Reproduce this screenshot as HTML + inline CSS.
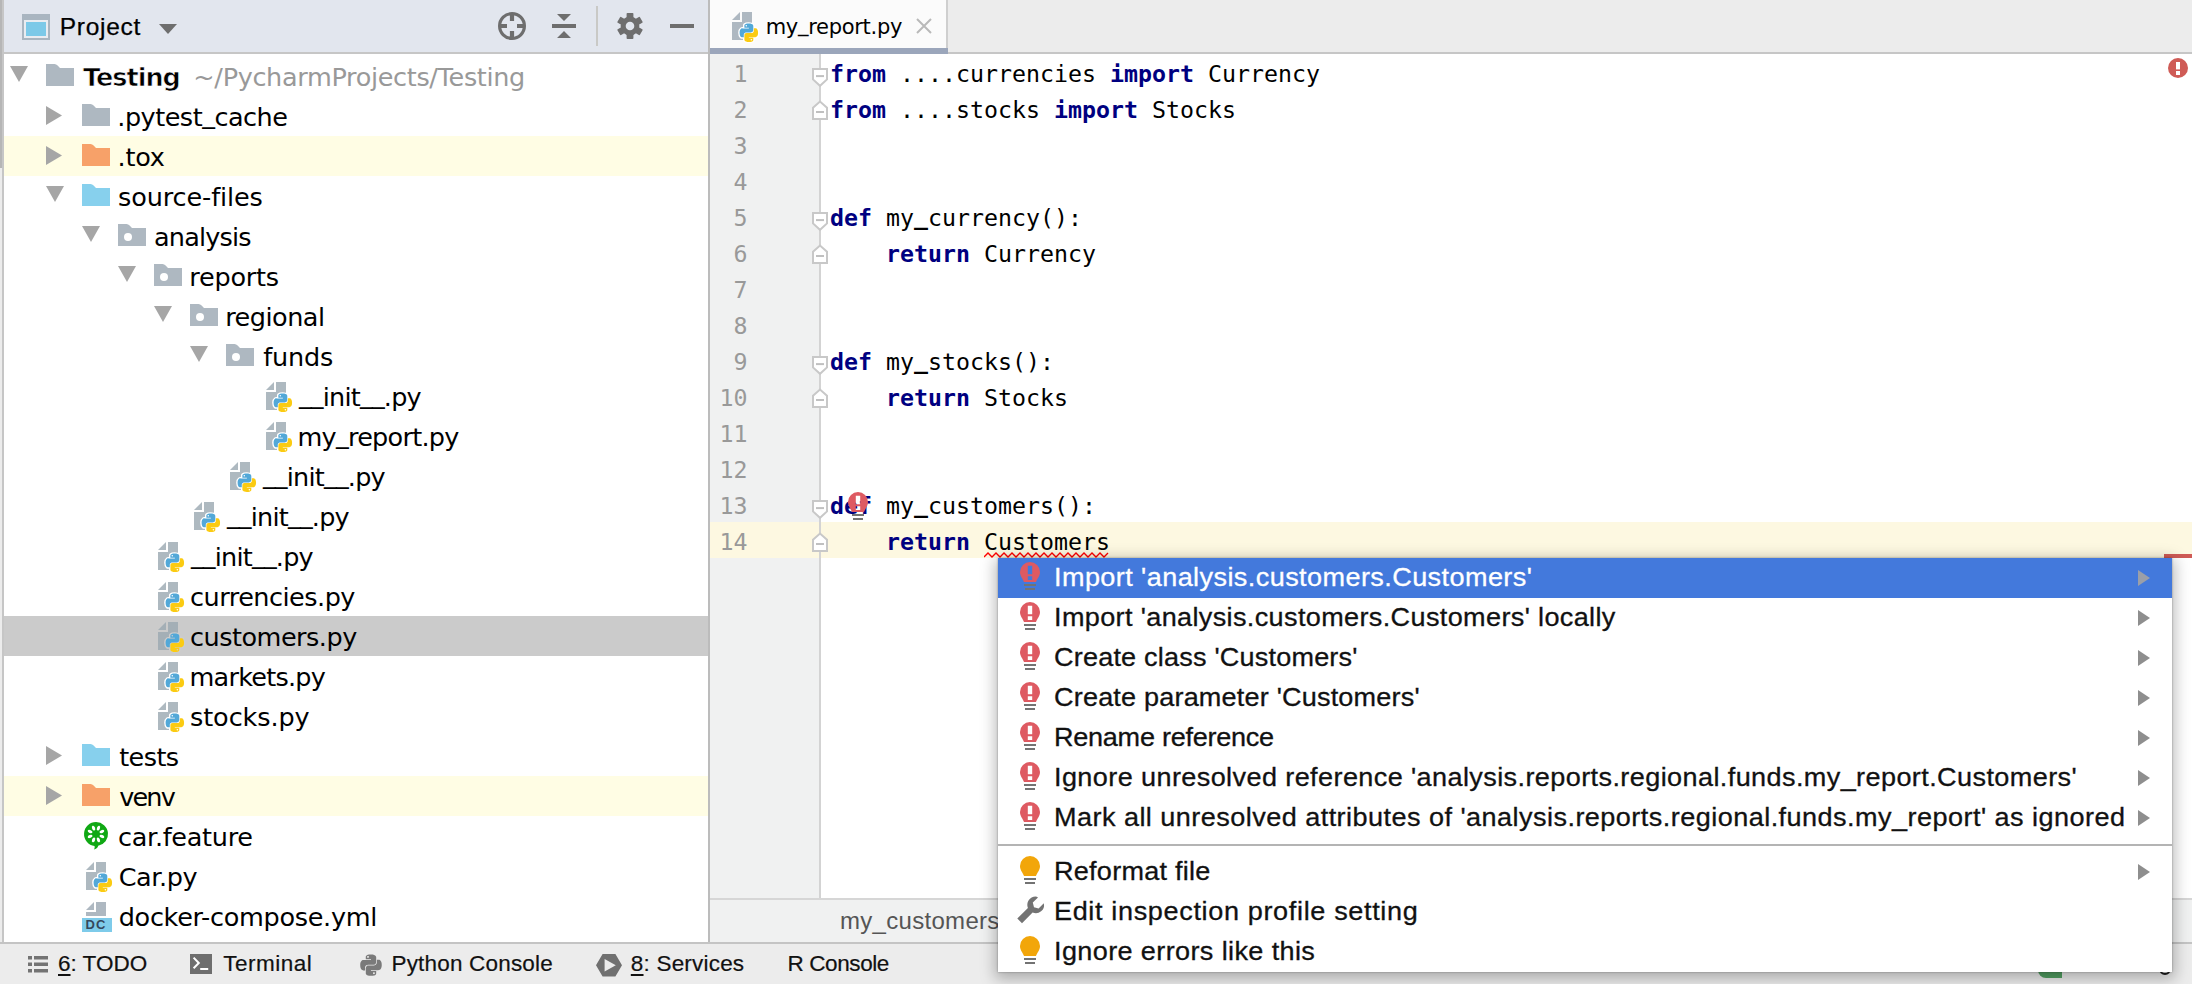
<!DOCTYPE html>
<html lang="en"><head><meta charset="utf-8"><title>PyCharm - my_report.py</title>
<style>
html,body{margin:0;padding:0}
body{width:2192px;height:984px;overflow:hidden;position:relative;background:#fff;
 font-family:"Liberation Sans",sans-serif;color:#000}
div,span,svg,pre{position:absolute;margin:0;padding:0}
b{font-weight:bold}
i.u{font-style:normal;position:relative;top:-3px}
.cd i.u{top:-0.6px;font-weight:bold}
#tabt i.u{top:-2.4px}
.ic{display:block}
/* left stripe */
#stripeA{left:0;top:0;width:2px;height:984px;background:#ececec}
#stripeA2{left:0;top:0;width:2px;height:168px;background:#b6b6b6}
#stripeB{left:2px;top:0;width:2px;height:984px;background:#c6c6c6}
/* project header */
#phead{left:4px;top:0;width:704px;height:52px;background:#e2e6ee}
#pheadb{left:4px;top:52px;width:704px;height:2px;background:#c6c6c6}
#ptitle{left:55.8px;top:6.8px;font-size:24.5px;letter-spacing:0.7px;line-height:40px;white-space:nowrap;-webkit-text-stroke:0.25px #000}
/* tree */
#tree{left:4px;top:54px;width:704px;height:888px;background:#fff;overflow:hidden;
 font-family:"DejaVu Sans","Liberation Sans",sans-serif;font-size:25.5px;letter-spacing:-0.5px}
#treewrap{left:4px;top:0;width:704px;height:942px;overflow:hidden;
 font-family:"DejaVu Sans","Liberation Sans",sans-serif;font-size:25.5px;letter-spacing:-0.5px}
.row{left:0;width:704px;height:40px}
.row.excl{background:#fffde4}
.row.sel{background:#cbcbcb}
.row .t{top:1px;line-height:40px;white-space:nowrap;color:#000}
.row .t b{letter-spacing:-1px;-webkit-text-stroke:0.7px #fff}
.row .path{position:static;color:#999;margin-left:13.5px;letter-spacing:-0.33px}
#pborder{left:708px;top:0;width:2px;height:942px;background:#bcbcbc}
/* editor */
#tabbar{left:710px;top:0;width:1482px;height:52px;background:#ececec}
#tabbarb{left:710px;top:52px;width:1482px;height:2px;background:#c6c6c6}
#tab{left:710px;top:0;width:236px;height:48px;background:#fbfbfb}
#tabr{left:946px;top:0;width:2px;height:48px;background:#cfcfcf}
#tabu{left:710px;top:48px;width:238px;height:6px;background:#9ba6bb}
#tabt{left:55.7px;top:6.6px;line-height:40px;font-family:"DejaVu Sans",sans-serif;font-size:21px;letter-spacing:-0.3px;white-space:nowrap}
#gutter{left:710px;top:54px;width:109px;height:844px;background:#f0f1f1}
#gline{left:819px;top:54px;width:2px;height:844px;background:#d3d3d3}
.ln{left:710px;width:1482px;height:36px}
.ln.cur{background:#fdf8e1}
.no{right:1444.4px;top:1.7px;line-height:36px;font-family:"DejaVu Sans Mono","Liberation Mono",monospace;font-size:23.25px;color:#999;text-align:right}
.cd{left:120px;top:1.7px;line-height:36px;font-family:"DejaVu Sans Mono","Liberation Mono",monospace;font-size:23.25px;color:#000;white-space:pre}
.cd b{color:#000080}
.err{position:static}
.fold{left:811px}
#errmark{left:2164px;top:554px;width:28px;height:4px;background:#cf5b56}
#crumb{left:710px;top:898px;width:1482px;height:44px;background:#f0f1f1}
#crumbb{left:710px;top:898px;width:1482px;height:2px;background:#d6d6d6}
#crumbt{left:130px;top:3px;line-height:40px;font-size:24px;letter-spacing:0.3px;color:#555;white-space:nowrap}
/* bottom bar */
#bbar{left:0;top:942px;width:2192px;height:42px;background:#ececec}
#bbarb{left:0;top:942px;width:2192px;height:2px;background:#c4c4c4}
.bt{top:2px;line-height:40px;font-size:22.5px;white-space:nowrap;color:#111;-webkit-text-stroke:0.2px #111}
.bt u{text-decoration:underline;text-underline-offset:2.5px;text-decoration-thickness:2px}
/* popup */
#popup{left:998px;top:558px;width:1174px;height:414px;background:#fff;
 box-shadow:0 4px 14px 3px rgba(0,0,0,.27), 0 0 2px rgba(0,0,0,.35)}
.pi{left:0;width:1174px;height:40px}
.pi.selp{background:#4379dc}
.pi.selp .pt{color:#fff}
.pt{left:56px;top:-1px;line-height:40px;font-size:26px;white-space:nowrap;color:#111;transform-origin:0 50%;transform:scaleX(1.04);-webkit-text-stroke:0.3px #111}
.pi.selp .pt{-webkit-text-stroke:0.3px #fff}
.sep{left:0;width:1174px;height:2px;background:#b4b4b4}
</style></head><body>

<!-- ======= left stripe ======= -->
<div id="stripeA"></div><div id="stripeA2"></div><div id="stripeB"></div>

<!-- ======= project tool window ======= -->
<div id="phead">
 <svg class="ic" width="28" height="26" viewBox="0 0 28 26" style="left:18px;top:14px">
  <rect x="0" y="0" width="28" height="26" fill="#a9b5c0"/>
  <rect x="2" y="6" width="24" height="18" fill="#e9ecf1"/>
  <rect x="4" y="8" width="20" height="14" fill="#7cc9e8"/>
 </svg>
 <span id="ptitle">Project</span>
 <svg class="ic" width="18" height="10" viewBox="0 0 18 10" style="left:155px;top:24px"><path d="M0,0 H18 L9,10Z" fill="#6e6e6e"/></svg>
 <!-- locate -->
 <svg class="ic" width="30" height="30" viewBox="0 0 30 30" style="left:493px;top:11px">
  <circle cx="15" cy="15" r="12.4" fill="none" stroke="#6e6e6e" stroke-width="3.2"/>
  <path d="M15,3 V10 M15,20 V27 M3,15 H10 M20,15 H27" stroke="#6e6e6e" stroke-width="4.2" fill="none"/>
 </svg>
 <!-- collapse all -->
 <svg class="ic" width="24" height="26" viewBox="0 0 24 26" style="left:548px;top:13px">
  <path d="M5,1 H19 L12,8Z M0,11 H24 V15 H0Z M12,18 L19,25 H5Z" fill="#6e6e6e"/>
 </svg>
 <div style="left:592px;top:6px;width:2px;height:40px;background:#c9c9c6"></div>
 <!-- gear -->
 <svg class="ic" width="26" height="26" viewBox="-13 -13 26 26" style="left:613px;top:13px">
  <g fill="#6e6e6e">
   <rect x="-3.4" y="-13" width="6.8" height="26" rx="0.8"/>
   <rect x="-3.4" y="-13" width="6.8" height="26" rx="0.8" transform="rotate(60)"/>
   <rect x="-3.4" y="-13" width="6.8" height="26" rx="0.8" transform="rotate(120)"/>
   <circle r="9.4"/>
  </g>
  <circle r="4.3" fill="#e2e6ee"/>
 </svg>
 <div style="left:666px;top:24px;width:24px;height:4px;background:#6e6e6e"></div>
</div>
<div id="pheadb"></div>

<div id="tree">
<div style="left:0;top:-54px;width:704px;height:942px">
<div class="row " style="top:56px"><svg class="ic" width="18" height="16" viewBox="0 0 18 16" style="left:6px;top:10px"><path d="M0,0 H18 L9,16Z" fill="#a6a6a6"/></svg><svg class="ic" width="28" height="22" viewBox="0 0 28 22" style="left:42px;top:8px"><path d="M0,0 H8.5 Q10.3,0 11.6,1.6 L14,4 H28 V22 H0Z" fill="#aeb8c1"/></svg><span class="t" style="left:79.0px;letter-spacing:-0.50px"><b>Testing</b><span class="path">~/PycharmProjects/Testing</span></span></div>
<div class="row " style="top:96px"><svg class="ic" width="16" height="19" viewBox="0 0 16 19" style="left:42px;top:10px"><path d="M0,0 L16,9.5 L0,19Z" fill="#a6a6a6"/></svg><svg class="ic" width="28" height="22" viewBox="0 0 28 22" style="left:78px;top:8px"><path d="M0,0 H8.5 Q10.3,0 11.6,1.6 L14,4 H28 V22 H0Z" fill="#aeb8c1"/></svg><span class="t" style="left:113.3px;letter-spacing:-0.50px">.pytest<i class="u">_</i>cache</span></div>
<div class="row excl" style="top:136px"><svg class="ic" width="16" height="19" viewBox="0 0 16 19" style="left:42px;top:10px"><path d="M0,0 L16,9.5 L0,19Z" fill="#a6a6a6"/></svg><svg class="ic" width="28" height="22" viewBox="0 0 28 22" style="left:78px;top:8px"><path d="M0,0 H8.5 Q10.3,0 11.6,1.6 L14,4 H28 V22 H0Z" fill="#f7a169"/></svg><span class="t" style="left:113.5px;letter-spacing:-0.20px">.tox</span></div>
<div class="row " style="top:176px"><svg class="ic" width="18" height="16" viewBox="0 0 18 16" style="left:42px;top:10px"><path d="M0,0 H18 L9,16Z" fill="#a6a6a6"/></svg><svg class="ic" width="28" height="22" viewBox="0 0 28 22" style="left:78px;top:8px"><path d="M0,0 H8.5 Q10.3,0 11.6,1.6 L14,4 H28 V22 H0Z" fill="#87d0ed"/></svg><span class="t" style="left:114.0px;letter-spacing:-0.10px">source-files</span></div>
<div class="row " style="top:216px"><svg class="ic" width="18" height="16" viewBox="0 0 18 16" style="left:78px;top:10px"><path d="M0,0 H18 L9,16Z" fill="#a6a6a6"/></svg><svg class="ic" width="28" height="22" viewBox="0 0 28 22" style="left:114px;top:8px"><path d="M0,0 H8.5 Q10.3,0 11.6,1.6 L14,4 H28 V22 H0Z" fill="#aeb8c1"/><circle cx="10" cy="13" r="4" fill="#fff"/></svg><span class="t" style="left:150.0px;letter-spacing:-0.80px">analysis</span></div>
<div class="row " style="top:256px"><svg class="ic" width="18" height="16" viewBox="0 0 18 16" style="left:114px;top:10px"><path d="M0,0 H18 L9,16Z" fill="#a6a6a6"/></svg><svg class="ic" width="28" height="22" viewBox="0 0 28 22" style="left:150px;top:8px"><path d="M0,0 H8.5 Q10.3,0 11.6,1.6 L14,4 H28 V22 H0Z" fill="#aeb8c1"/><circle cx="10" cy="13" r="4" fill="#fff"/></svg><span class="t" style="left:185.2px;letter-spacing:-0.20px">reports</span></div>
<div class="row " style="top:296px"><svg class="ic" width="18" height="16" viewBox="0 0 18 16" style="left:150px;top:10px"><path d="M0,0 H18 L9,16Z" fill="#a6a6a6"/></svg><svg class="ic" width="28" height="22" viewBox="0 0 28 22" style="left:186px;top:8px"><path d="M0,0 H8.5 Q10.3,0 11.6,1.6 L14,4 H28 V22 H0Z" fill="#aeb8c1"/><circle cx="10" cy="13" r="4" fill="#fff"/></svg><span class="t" style="left:221.2px;letter-spacing:-0.50px">regional</span></div>
<div class="row " style="top:336px"><svg class="ic" width="18" height="16" viewBox="0 0 18 16" style="left:186px;top:10px"><path d="M0,0 H18 L9,16Z" fill="#a6a6a6"/></svg><svg class="ic" width="28" height="22" viewBox="0 0 28 22" style="left:222px;top:8px"><path d="M0,0 H8.5 Q10.3,0 11.6,1.6 L14,4 H28 V22 H0Z" fill="#aeb8c1"/><circle cx="10" cy="13" r="4" fill="#fff"/></svg><span class="t" style="left:259.3px;letter-spacing:-0.20px">funds</span></div>
<div class="row " style="top:376px"><svg class="ic" width="28" height="32" viewBox="0 0 28 32" style="left:262px;top:6px"><path fill="#9aa7b0" fill-opacity=".8" d="M8,0 V8 H0Z M10,0 H20 V28 H0 V10 H10Z"/><g transform="translate(7.6,11.6) scale(0.167)"><g stroke="#fff" stroke-width="17" stroke-linejoin="round"><path fill="#fff" d="M54.9,0C26.8,0,28.6,12.2,28.6,12.2l0,12.6h26.8v3.8H17.9C17.9,28.6,0,26.6,0,54.9c0,28.3,15.7,27.3,15.7,27.3h9.4V69c0,0-.5-15.7,15.4-15.7h26.6c0,0,14.9.24,14.9-14.4V14.9C82,14.9,84.3,0,54.9,0z"/><path fill="#fff" d="M55.7,109.8c28.1,0,26.3-12.2,26.3-12.2l0-12.6H55.2v-3.8h37.4c0,0,18,2,18-26.3c0-28.3-15.7-27.3-15.7-27.3h-9.4v13.1c0,0,.5,15.7-15.4,15.7H43.6c0,0-14.9-.24-14.9,14.4v24.1C28.7,94.9,26.4,109.8,55.7,109.8z"/></g><path fill="#52a8d8" fill-rule="evenodd" d="M54.9,0C26.8,0,28.6,12.2,28.6,12.2l0,12.6h26.8v3.8H17.9C17.9,28.6,0,26.6,0,54.9c0,28.3,15.7,27.3,15.7,27.3h9.4V69c0,0-.5-15.7,15.4-15.7h26.6c0,0,14.9.24,14.9-14.4V14.9C82,14.9,84.3,0,54.9,0zM40.1,8.5c2.7,0,4.8,2.2,4.8,4.8c0,2.7-2.2,4.8-4.8,4.8c-2.7,0-4.8-2.2-4.8-4.8C35.3,10.7,37.5,8.5,40.1,8.5z"/><path fill="#fbcb12" fill-rule="evenodd" d="M55.7,109.8c28.1,0,26.3-12.2,26.3-12.2l0-12.6H55.2v-3.8h37.4c0,0,18,2,18-26.3c0-28.3-15.7-27.3-15.7-27.3h-9.4v13.1c0,0,.5,15.7-15.4,15.7H43.6c0,0-14.9-.24-14.9,14.4v24.1C28.7,94.9,26.4,109.8,55.7,109.8zM70.5,101.3c-2.7,0-4.8-2.2-4.8-4.8c0-2.7,2.2-4.8,4.8-4.8c2.7,0,4.8,2.2,4.8,4.8C75.3,99.1,73.2,101.3,70.5,101.3z"/></g></svg><span class="t" style="left:294.9px;letter-spacing:-0.80px"><i class="u">_</i><i class="u">_</i>init<i class="u">_</i><i class="u">_</i>.py</span></div>
<div class="row " style="top:416px"><svg class="ic" width="28" height="32" viewBox="0 0 28 32" style="left:262px;top:6px"><path fill="#9aa7b0" fill-opacity=".8" d="M8,0 V8 H0Z M10,0 H20 V28 H0 V10 H10Z"/><g transform="translate(7.6,11.6) scale(0.167)"><g stroke="#fff" stroke-width="17" stroke-linejoin="round"><path fill="#fff" d="M54.9,0C26.8,0,28.6,12.2,28.6,12.2l0,12.6h26.8v3.8H17.9C17.9,28.6,0,26.6,0,54.9c0,28.3,15.7,27.3,15.7,27.3h9.4V69c0,0-.5-15.7,15.4-15.7h26.6c0,0,14.9.24,14.9-14.4V14.9C82,14.9,84.3,0,54.9,0z"/><path fill="#fff" d="M55.7,109.8c28.1,0,26.3-12.2,26.3-12.2l0-12.6H55.2v-3.8h37.4c0,0,18,2,18-26.3c0-28.3-15.7-27.3-15.7-27.3h-9.4v13.1c0,0,.5,15.7-15.4,15.7H43.6c0,0-14.9-.24-14.9,14.4v24.1C28.7,94.9,26.4,109.8,55.7,109.8z"/></g><path fill="#52a8d8" fill-rule="evenodd" d="M54.9,0C26.8,0,28.6,12.2,28.6,12.2l0,12.6h26.8v3.8H17.9C17.9,28.6,0,26.6,0,54.9c0,28.3,15.7,27.3,15.7,27.3h9.4V69c0,0-.5-15.7,15.4-15.7h26.6c0,0,14.9.24,14.9-14.4V14.9C82,14.9,84.3,0,54.9,0zM40.1,8.5c2.7,0,4.8,2.2,4.8,4.8c0,2.7-2.2,4.8-4.8,4.8c-2.7,0-4.8-2.2-4.8-4.8C35.3,10.7,37.5,8.5,40.1,8.5z"/><path fill="#fbcb12" fill-rule="evenodd" d="M55.7,109.8c28.1,0,26.3-12.2,26.3-12.2l0-12.6H55.2v-3.8h37.4c0,0,18,2,18-26.3c0-28.3-15.7-27.3-15.7-27.3h-9.4v13.1c0,0,.5,15.7-15.4,15.7H43.6c0,0-14.9-.24-14.9,14.4v24.1C28.7,94.9,26.4,109.8,55.7,109.8zM70.5,101.3c-2.7,0-4.8-2.2-4.8-4.8c0-2.7,2.2-4.8,4.8-4.8c2.7,0,4.8,2.2,4.8,4.8C75.3,99.1,73.2,101.3,70.5,101.3z"/></g></svg><span class="t" style="left:293.5px;letter-spacing:-0.74px">my<i class="u">_</i>report.py</span></div>
<div class="row " style="top:456px"><svg class="ic" width="28" height="32" viewBox="0 0 28 32" style="left:226px;top:6px"><path fill="#9aa7b0" fill-opacity=".8" d="M8,0 V8 H0Z M10,0 H20 V28 H0 V10 H10Z"/><g transform="translate(7.6,11.6) scale(0.167)"><g stroke="#fff" stroke-width="17" stroke-linejoin="round"><path fill="#fff" d="M54.9,0C26.8,0,28.6,12.2,28.6,12.2l0,12.6h26.8v3.8H17.9C17.9,28.6,0,26.6,0,54.9c0,28.3,15.7,27.3,15.7,27.3h9.4V69c0,0-.5-15.7,15.4-15.7h26.6c0,0,14.9.24,14.9-14.4V14.9C82,14.9,84.3,0,54.9,0z"/><path fill="#fff" d="M55.7,109.8c28.1,0,26.3-12.2,26.3-12.2l0-12.6H55.2v-3.8h37.4c0,0,18,2,18-26.3c0-28.3-15.7-27.3-15.7-27.3h-9.4v13.1c0,0,.5,15.7-15.4,15.7H43.6c0,0-14.9-.24-14.9,14.4v24.1C28.7,94.9,26.4,109.8,55.7,109.8z"/></g><path fill="#52a8d8" fill-rule="evenodd" d="M54.9,0C26.8,0,28.6,12.2,28.6,12.2l0,12.6h26.8v3.8H17.9C17.9,28.6,0,26.6,0,54.9c0,28.3,15.7,27.3,15.7,27.3h9.4V69c0,0-.5-15.7,15.4-15.7h26.6c0,0,14.9.24,14.9-14.4V14.9C82,14.9,84.3,0,54.9,0zM40.1,8.5c2.7,0,4.8,2.2,4.8,4.8c0,2.7-2.2,4.8-4.8,4.8c-2.7,0-4.8-2.2-4.8-4.8C35.3,10.7,37.5,8.5,40.1,8.5z"/><path fill="#fbcb12" fill-rule="evenodd" d="M55.7,109.8c28.1,0,26.3-12.2,26.3-12.2l0-12.6H55.2v-3.8h37.4c0,0,18,2,18-26.3c0-28.3-15.7-27.3-15.7-27.3h-9.4v13.1c0,0,.5,15.7-15.4,15.7H43.6c0,0-14.9-.24-14.9,14.4v24.1C28.7,94.9,26.4,109.8,55.7,109.8zM70.5,101.3c-2.7,0-4.8-2.2-4.8-4.8c0-2.7,2.2-4.8,4.8-4.8c2.7,0,4.8,2.2,4.8,4.8C75.3,99.1,73.2,101.3,70.5,101.3z"/></g></svg><span class="t" style="left:258.9px;letter-spacing:-0.80px"><i class="u">_</i><i class="u">_</i>init<i class="u">_</i><i class="u">_</i>.py</span></div>
<div class="row " style="top:496px"><svg class="ic" width="28" height="32" viewBox="0 0 28 32" style="left:190px;top:6px"><path fill="#9aa7b0" fill-opacity=".8" d="M8,0 V8 H0Z M10,0 H20 V28 H0 V10 H10Z"/><g transform="translate(7.6,11.6) scale(0.167)"><g stroke="#fff" stroke-width="17" stroke-linejoin="round"><path fill="#fff" d="M54.9,0C26.8,0,28.6,12.2,28.6,12.2l0,12.6h26.8v3.8H17.9C17.9,28.6,0,26.6,0,54.9c0,28.3,15.7,27.3,15.7,27.3h9.4V69c0,0-.5-15.7,15.4-15.7h26.6c0,0,14.9.24,14.9-14.4V14.9C82,14.9,84.3,0,54.9,0z"/><path fill="#fff" d="M55.7,109.8c28.1,0,26.3-12.2,26.3-12.2l0-12.6H55.2v-3.8h37.4c0,0,18,2,18-26.3c0-28.3-15.7-27.3-15.7-27.3h-9.4v13.1c0,0,.5,15.7-15.4,15.7H43.6c0,0-14.9-.24-14.9,14.4v24.1C28.7,94.9,26.4,109.8,55.7,109.8z"/></g><path fill="#52a8d8" fill-rule="evenodd" d="M54.9,0C26.8,0,28.6,12.2,28.6,12.2l0,12.6h26.8v3.8H17.9C17.9,28.6,0,26.6,0,54.9c0,28.3,15.7,27.3,15.7,27.3h9.4V69c0,0-.5-15.7,15.4-15.7h26.6c0,0,14.9.24,14.9-14.4V14.9C82,14.9,84.3,0,54.9,0zM40.1,8.5c2.7,0,4.8,2.2,4.8,4.8c0,2.7-2.2,4.8-4.8,4.8c-2.7,0-4.8-2.2-4.8-4.8C35.3,10.7,37.5,8.5,40.1,8.5z"/><path fill="#fbcb12" fill-rule="evenodd" d="M55.7,109.8c28.1,0,26.3-12.2,26.3-12.2l0-12.6H55.2v-3.8h37.4c0,0,18,2,18-26.3c0-28.3-15.7-27.3-15.7-27.3h-9.4v13.1c0,0,.5,15.7-15.4,15.7H43.6c0,0-14.9-.24-14.9,14.4v24.1C28.7,94.9,26.4,109.8,55.7,109.8zM70.5,101.3c-2.7,0-4.8-2.2-4.8-4.8c0-2.7,2.2-4.8,4.8-4.8c2.7,0,4.8,2.2,4.8,4.8C75.3,99.1,73.2,101.3,70.5,101.3z"/></g></svg><span class="t" style="left:222.9px;letter-spacing:-0.80px"><i class="u">_</i><i class="u">_</i>init<i class="u">_</i><i class="u">_</i>.py</span></div>
<div class="row " style="top:536px"><svg class="ic" width="28" height="32" viewBox="0 0 28 32" style="left:154px;top:6px"><path fill="#9aa7b0" fill-opacity=".8" d="M8,0 V8 H0Z M10,0 H20 V28 H0 V10 H10Z"/><g transform="translate(7.6,11.6) scale(0.167)"><g stroke="#fff" stroke-width="17" stroke-linejoin="round"><path fill="#fff" d="M54.9,0C26.8,0,28.6,12.2,28.6,12.2l0,12.6h26.8v3.8H17.9C17.9,28.6,0,26.6,0,54.9c0,28.3,15.7,27.3,15.7,27.3h9.4V69c0,0-.5-15.7,15.4-15.7h26.6c0,0,14.9.24,14.9-14.4V14.9C82,14.9,84.3,0,54.9,0z"/><path fill="#fff" d="M55.7,109.8c28.1,0,26.3-12.2,26.3-12.2l0-12.6H55.2v-3.8h37.4c0,0,18,2,18-26.3c0-28.3-15.7-27.3-15.7-27.3h-9.4v13.1c0,0,.5,15.7-15.4,15.7H43.6c0,0-14.9-.24-14.9,14.4v24.1C28.7,94.9,26.4,109.8,55.7,109.8z"/></g><path fill="#52a8d8" fill-rule="evenodd" d="M54.9,0C26.8,0,28.6,12.2,28.6,12.2l0,12.6h26.8v3.8H17.9C17.9,28.6,0,26.6,0,54.9c0,28.3,15.7,27.3,15.7,27.3h9.4V69c0,0-.5-15.7,15.4-15.7h26.6c0,0,14.9.24,14.9-14.4V14.9C82,14.9,84.3,0,54.9,0zM40.1,8.5c2.7,0,4.8,2.2,4.8,4.8c0,2.7-2.2,4.8-4.8,4.8c-2.7,0-4.8-2.2-4.8-4.8C35.3,10.7,37.5,8.5,40.1,8.5z"/><path fill="#fbcb12" fill-rule="evenodd" d="M55.7,109.8c28.1,0,26.3-12.2,26.3-12.2l0-12.6H55.2v-3.8h37.4c0,0,18,2,18-26.3c0-28.3-15.7-27.3-15.7-27.3h-9.4v13.1c0,0,.5,15.7-15.4,15.7H43.6c0,0-14.9-.24-14.9,14.4v24.1C28.7,94.9,26.4,109.8,55.7,109.8zM70.5,101.3c-2.7,0-4.8-2.2-4.8-4.8c0-2.7,2.2-4.8,4.8-4.8c2.7,0,4.8,2.2,4.8,4.8C75.3,99.1,73.2,101.3,70.5,101.3z"/></g></svg><span class="t" style="left:186.9px;letter-spacing:-0.80px"><i class="u">_</i><i class="u">_</i>init<i class="u">_</i><i class="u">_</i>.py</span></div>
<div class="row " style="top:576px"><svg class="ic" width="28" height="32" viewBox="0 0 28 32" style="left:154px;top:6px"><path fill="#9aa7b0" fill-opacity=".8" d="M8,0 V8 H0Z M10,0 H20 V28 H0 V10 H10Z"/><g transform="translate(7.6,11.6) scale(0.167)"><g stroke="#fff" stroke-width="17" stroke-linejoin="round"><path fill="#fff" d="M54.9,0C26.8,0,28.6,12.2,28.6,12.2l0,12.6h26.8v3.8H17.9C17.9,28.6,0,26.6,0,54.9c0,28.3,15.7,27.3,15.7,27.3h9.4V69c0,0-.5-15.7,15.4-15.7h26.6c0,0,14.9.24,14.9-14.4V14.9C82,14.9,84.3,0,54.9,0z"/><path fill="#fff" d="M55.7,109.8c28.1,0,26.3-12.2,26.3-12.2l0-12.6H55.2v-3.8h37.4c0,0,18,2,18-26.3c0-28.3-15.7-27.3-15.7-27.3h-9.4v13.1c0,0,.5,15.7-15.4,15.7H43.6c0,0-14.9-.24-14.9,14.4v24.1C28.7,94.9,26.4,109.8,55.7,109.8z"/></g><path fill="#52a8d8" fill-rule="evenodd" d="M54.9,0C26.8,0,28.6,12.2,28.6,12.2l0,12.6h26.8v3.8H17.9C17.9,28.6,0,26.6,0,54.9c0,28.3,15.7,27.3,15.7,27.3h9.4V69c0,0-.5-15.7,15.4-15.7h26.6c0,0,14.9.24,14.9-14.4V14.9C82,14.9,84.3,0,54.9,0zM40.1,8.5c2.7,0,4.8,2.2,4.8,4.8c0,2.7-2.2,4.8-4.8,4.8c-2.7,0-4.8-2.2-4.8-4.8C35.3,10.7,37.5,8.5,40.1,8.5z"/><path fill="#fbcb12" fill-rule="evenodd" d="M55.7,109.8c28.1,0,26.3-12.2,26.3-12.2l0-12.6H55.2v-3.8h37.4c0,0,18,2,18-26.3c0-28.3-15.7-27.3-15.7-27.3h-9.4v13.1c0,0,.5,15.7-15.4,15.7H43.6c0,0-14.9-.24-14.9,14.4v24.1C28.7,94.9,26.4,109.8,55.7,109.8zM70.5,101.3c-2.7,0-4.8-2.2-4.8-4.8c0-2.7,2.2-4.8,4.8-4.8c2.7,0,4.8,2.2,4.8,4.8C75.3,99.1,73.2,101.3,70.5,101.3z"/></g></svg><span class="t" style="left:186.0px;letter-spacing:-0.50px">currencies.py</span></div>
<div class="row sel" style="top:616px"><svg class="ic" width="28" height="32" viewBox="0 0 28 32" style="left:154px;top:6px"><path fill="#9aa7b0" fill-opacity=".8" d="M8,0 V8 H0Z M10,0 H20 V28 H0 V10 H10Z"/><g transform="translate(7.6,11.6) scale(0.167)"><g stroke="#cdcdcd" stroke-width="17" stroke-linejoin="round"><path fill="#cdcdcd" d="M54.9,0C26.8,0,28.6,12.2,28.6,12.2l0,12.6h26.8v3.8H17.9C17.9,28.6,0,26.6,0,54.9c0,28.3,15.7,27.3,15.7,27.3h9.4V69c0,0-.5-15.7,15.4-15.7h26.6c0,0,14.9.24,14.9-14.4V14.9C82,14.9,84.3,0,54.9,0z"/><path fill="#cdcdcd" d="M55.7,109.8c28.1,0,26.3-12.2,26.3-12.2l0-12.6H55.2v-3.8h37.4c0,0,18,2,18-26.3c0-28.3-15.7-27.3-15.7-27.3h-9.4v13.1c0,0,.5,15.7-15.4,15.7H43.6c0,0-14.9-.24-14.9,14.4v24.1C28.7,94.9,26.4,109.8,55.7,109.8z"/></g><path fill="#52a8d8" fill-rule="evenodd" d="M54.9,0C26.8,0,28.6,12.2,28.6,12.2l0,12.6h26.8v3.8H17.9C17.9,28.6,0,26.6,0,54.9c0,28.3,15.7,27.3,15.7,27.3h9.4V69c0,0-.5-15.7,15.4-15.7h26.6c0,0,14.9.24,14.9-14.4V14.9C82,14.9,84.3,0,54.9,0zM40.1,8.5c2.7,0,4.8,2.2,4.8,4.8c0,2.7-2.2,4.8-4.8,4.8c-2.7,0-4.8-2.2-4.8-4.8C35.3,10.7,37.5,8.5,40.1,8.5z"/><path fill="#fbcb12" fill-rule="evenodd" d="M55.7,109.8c28.1,0,26.3-12.2,26.3-12.2l0-12.6H55.2v-3.8h37.4c0,0,18,2,18-26.3c0-28.3-15.7-27.3-15.7-27.3h-9.4v13.1c0,0,.5,15.7-15.4,15.7H43.6c0,0-14.9-.24-14.9,14.4v24.1C28.7,94.9,26.4,109.8,55.7,109.8zM70.5,101.3c-2.7,0-4.8-2.2-4.8-4.8c0-2.7,2.2-4.8,4.8-4.8c2.7,0,4.8,2.2,4.8,4.8C75.3,99.1,73.2,101.3,70.5,101.3z"/></g></svg><span class="t" style="left:186.0px;letter-spacing:-0.50px">customers.py</span></div>
<div class="row " style="top:656px"><svg class="ic" width="28" height="32" viewBox="0 0 28 32" style="left:154px;top:6px"><path fill="#9aa7b0" fill-opacity=".8" d="M8,0 V8 H0Z M10,0 H20 V28 H0 V10 H10Z"/><g transform="translate(7.6,11.6) scale(0.167)"><g stroke="#fff" stroke-width="17" stroke-linejoin="round"><path fill="#fff" d="M54.9,0C26.8,0,28.6,12.2,28.6,12.2l0,12.6h26.8v3.8H17.9C17.9,28.6,0,26.6,0,54.9c0,28.3,15.7,27.3,15.7,27.3h9.4V69c0,0-.5-15.7,15.4-15.7h26.6c0,0,14.9.24,14.9-14.4V14.9C82,14.9,84.3,0,54.9,0z"/><path fill="#fff" d="M55.7,109.8c28.1,0,26.3-12.2,26.3-12.2l0-12.6H55.2v-3.8h37.4c0,0,18,2,18-26.3c0-28.3-15.7-27.3-15.7-27.3h-9.4v13.1c0,0,.5,15.7-15.4,15.7H43.6c0,0-14.9-.24-14.9,14.4v24.1C28.7,94.9,26.4,109.8,55.7,109.8z"/></g><path fill="#52a8d8" fill-rule="evenodd" d="M54.9,0C26.8,0,28.6,12.2,28.6,12.2l0,12.6h26.8v3.8H17.9C17.9,28.6,0,26.6,0,54.9c0,28.3,15.7,27.3,15.7,27.3h9.4V69c0,0-.5-15.7,15.4-15.7h26.6c0,0,14.9.24,14.9-14.4V14.9C82,14.9,84.3,0,54.9,0zM40.1,8.5c2.7,0,4.8,2.2,4.8,4.8c0,2.7-2.2,4.8-4.8,4.8c-2.7,0-4.8-2.2-4.8-4.8C35.3,10.7,37.5,8.5,40.1,8.5z"/><path fill="#fbcb12" fill-rule="evenodd" d="M55.7,109.8c28.1,0,26.3-12.2,26.3-12.2l0-12.6H55.2v-3.8h37.4c0,0,18,2,18-26.3c0-28.3-15.7-27.3-15.7-27.3h-9.4v13.1c0,0,.5,15.7-15.4,15.7H43.6c0,0-14.9-.24-14.9,14.4v24.1C28.7,94.9,26.4,109.8,55.7,109.8zM70.5,101.3c-2.7,0-4.8-2.2-4.8-4.8c0-2.7,2.2-4.8,4.8-4.8c2.7,0,4.8,2.2,4.8,4.8C75.3,99.1,73.2,101.3,70.5,101.3z"/></g></svg><span class="t" style="left:185.5px;letter-spacing:-0.76px">markets.py</span></div>
<div class="row " style="top:696px"><svg class="ic" width="28" height="32" viewBox="0 0 28 32" style="left:154px;top:6px"><path fill="#9aa7b0" fill-opacity=".8" d="M8,0 V8 H0Z M10,0 H20 V28 H0 V10 H10Z"/><g transform="translate(7.6,11.6) scale(0.167)"><g stroke="#fff" stroke-width="17" stroke-linejoin="round"><path fill="#fff" d="M54.9,0C26.8,0,28.6,12.2,28.6,12.2l0,12.6h26.8v3.8H17.9C17.9,28.6,0,26.6,0,54.9c0,28.3,15.7,27.3,15.7,27.3h9.4V69c0,0-.5-15.7,15.4-15.7h26.6c0,0,14.9.24,14.9-14.4V14.9C82,14.9,84.3,0,54.9,0z"/><path fill="#fff" d="M55.7,109.8c28.1,0,26.3-12.2,26.3-12.2l0-12.6H55.2v-3.8h37.4c0,0,18,2,18-26.3c0-28.3-15.7-27.3-15.7-27.3h-9.4v13.1c0,0,.5,15.7-15.4,15.7H43.6c0,0-14.9-.24-14.9,14.4v24.1C28.7,94.9,26.4,109.8,55.7,109.8z"/></g><path fill="#52a8d8" fill-rule="evenodd" d="M54.9,0C26.8,0,28.6,12.2,28.6,12.2l0,12.6h26.8v3.8H17.9C17.9,28.6,0,26.6,0,54.9c0,28.3,15.7,27.3,15.7,27.3h9.4V69c0,0-.5-15.7,15.4-15.7h26.6c0,0,14.9.24,14.9-14.4V14.9C82,14.9,84.3,0,54.9,0zM40.1,8.5c2.7,0,4.8,2.2,4.8,4.8c0,2.7-2.2,4.8-4.8,4.8c-2.7,0-4.8-2.2-4.8-4.8C35.3,10.7,37.5,8.5,40.1,8.5z"/><path fill="#fbcb12" fill-rule="evenodd" d="M55.7,109.8c28.1,0,26.3-12.2,26.3-12.2l0-12.6H55.2v-3.8h37.4c0,0,18,2,18-26.3c0-28.3-15.7-27.3-15.7-27.3h-9.4v13.1c0,0,.5,15.7-15.4,15.7H43.6c0,0-14.9-.24-14.9,14.4v24.1C28.7,94.9,26.4,109.8,55.7,109.8zM70.5,101.3c-2.7,0-4.8-2.2-4.8-4.8c0-2.7,2.2-4.8,4.8-4.8c2.7,0,4.8,2.2,4.8,4.8C75.3,99.1,73.2,101.3,70.5,101.3z"/></g></svg><span class="t" style="left:186.0px;letter-spacing:-0.08px">stocks.py</span></div>
<div class="row " style="top:736px"><svg class="ic" width="16" height="19" viewBox="0 0 16 19" style="left:42px;top:10px"><path d="M0,0 L16,9.5 L0,19Z" fill="#a6a6a6"/></svg><svg class="ic" width="28" height="22" viewBox="0 0 28 22" style="left:78px;top:8px"><path d="M0,0 H8.5 Q10.3,0 11.6,1.6 L14,4 H28 V22 H0Z" fill="#87d0ed"/></svg><span class="t" style="left:115.2px;letter-spacing:-0.58px">tests</span></div>
<div class="row excl" style="top:776px"><svg class="ic" width="16" height="19" viewBox="0 0 16 19" style="left:42px;top:10px"><path d="M0,0 L16,9.5 L0,19Z" fill="#a6a6a6"/></svg><svg class="ic" width="28" height="22" viewBox="0 0 28 22" style="left:78px;top:8px"><path d="M0,0 H8.5 Q10.3,0 11.6,1.6 L14,4 H28 V22 H0Z" fill="#f7a169"/></svg><span class="t" style="left:115.2px;letter-spacing:-1.80px">venv</span></div>
<div class="row " style="top:816px"><svg class="ic" width="26" height="30" viewBox="0 0 26 30" style="left:79px;top:5px"><path fill="#10a814" d="M13,1 a12,12 0 0 1 2.2,23.8 c-.6,2.2 -2,3.4 -4.4,3.8 c.9,-1.2 1.1,-2.4 .7,-3.7 A12,12 0 0 1 13,1z"/><g fill="#fff" transform="rotate(22.5 13 13)"><ellipse cx="13" cy="6.6" rx="1.5" ry="2.5"/><ellipse cx="13" cy="19.4" rx="1.5" ry="2.5"/><ellipse cx="6.6" cy="13" rx="2.5" ry="1.5"/><ellipse cx="19.4" cy="13" rx="2.5" ry="1.5"/><ellipse cx="8.5" cy="8.5" rx="1.5" ry="2.5" transform="rotate(-45 8.5 8.5)"/><ellipse cx="17.5" cy="8.5" rx="1.5" ry="2.5" transform="rotate(45 17.5 8.5)"/><ellipse cx="8.5" cy="17.5" rx="1.5" ry="2.5" transform="rotate(45 8.5 17.5)"/><ellipse cx="17.5" cy="17.5" rx="1.5" ry="2.5" transform="rotate(-45 17.5 17.5)"/></g></svg><span class="t" style="left:114.0px;letter-spacing:-0.30px">car.feature</span></div>
<div class="row " style="top:856px"><svg class="ic" width="28" height="32" viewBox="0 0 28 32" style="left:82px;top:6px"><path fill="#9aa7b0" fill-opacity=".8" d="M8,0 V8 H0Z M10,0 H20 V28 H0 V10 H10Z"/><g transform="translate(7.6,11.6) scale(0.167)"><g stroke="#fff" stroke-width="17" stroke-linejoin="round"><path fill="#fff" d="M54.9,0C26.8,0,28.6,12.2,28.6,12.2l0,12.6h26.8v3.8H17.9C17.9,28.6,0,26.6,0,54.9c0,28.3,15.7,27.3,15.7,27.3h9.4V69c0,0-.5-15.7,15.4-15.7h26.6c0,0,14.9.24,14.9-14.4V14.9C82,14.9,84.3,0,54.9,0z"/><path fill="#fff" d="M55.7,109.8c28.1,0,26.3-12.2,26.3-12.2l0-12.6H55.2v-3.8h37.4c0,0,18,2,18-26.3c0-28.3-15.7-27.3-15.7-27.3h-9.4v13.1c0,0,.5,15.7-15.4,15.7H43.6c0,0-14.9-.24-14.9,14.4v24.1C28.7,94.9,26.4,109.8,55.7,109.8z"/></g><path fill="#52a8d8" fill-rule="evenodd" d="M54.9,0C26.8,0,28.6,12.2,28.6,12.2l0,12.6h26.8v3.8H17.9C17.9,28.6,0,26.6,0,54.9c0,28.3,15.7,27.3,15.7,27.3h9.4V69c0,0-.5-15.7,15.4-15.7h26.6c0,0,14.9.24,14.9-14.4V14.9C82,14.9,84.3,0,54.9,0zM40.1,8.5c2.7,0,4.8,2.2,4.8,4.8c0,2.7-2.2,4.8-4.8,4.8c-2.7,0-4.8-2.2-4.8-4.8C35.3,10.7,37.5,8.5,40.1,8.5z"/><path fill="#fbcb12" fill-rule="evenodd" d="M55.7,109.8c28.1,0,26.3-12.2,26.3-12.2l0-12.6H55.2v-3.8h37.4c0,0,18,2,18-26.3c0-28.3-15.7-27.3-15.7-27.3h-9.4v13.1c0,0,.5,15.7-15.4,15.7H43.6c0,0-14.9-.24-14.9,14.4v24.1C28.7,94.9,26.4,109.8,55.7,109.8zM70.5,101.3c-2.7,0-4.8-2.2-4.8-4.8c0-2.7,2.2-4.8,4.8-4.8c2.7,0,4.8,2.2,4.8,4.8C75.3,99.1,73.2,101.3,70.5,101.3z"/></g></svg><span class="t" style="left:114.7px;letter-spacing:-0.40px">Car.py</span></div>
<div class="row " style="top:896px"><svg class="ic" width="30" height="32" viewBox="0 0 30 32" style="left:78px;top:6px"><path fill="#aeb8c1" d="M12,0 V8 H4Z M14,0 H24 V14 H4 V10 H14Z"/><rect x="0" y="16" width="30" height="14" fill="#7ecbea"/><text x="3.6" y="27.4" font-family="'Liberation Sans',sans-serif" font-weight="bold" font-size="13" fill="#35475c" letter-spacing="0.9">DC</text></svg><span class="t" style="left:114.7px;letter-spacing:-0.30px">docker-compose.yml</span></div>
</div>
</div>
<div id="pborder"></div>

<!-- ======= editor ======= -->
<div id="tabbar"></div><div id="tabbarb"></div>
<div id="tab">
 <svg class="ic" width="28" height="32" viewBox="0 0 28 32" style="left:22px;top:12px">
  <path fill="#aeb8c1" d="M8,0 V8 H0Z M10,0 H20 V28 H0 V10 H10Z"/><g transform="translate(7.6,11.6) scale(0.167)"><g stroke="#fff" stroke-width="17" stroke-linejoin="round"><path fill="#fff" d="M54.9,0C26.8,0,28.6,12.2,28.6,12.2l0,12.6h26.8v3.8H17.9C17.9,28.6,0,26.6,0,54.9c0,28.3,15.7,27.3,15.7,27.3h9.4V69c0,0-.5-15.7,15.4-15.7h26.6c0,0,14.9.24,14.9-14.4V14.9C82,14.9,84.3,0,54.9,0z"/><path fill="#fff" d="M55.7,109.8c28.1,0,26.3-12.2,26.3-12.2l0-12.6H55.2v-3.8h37.4c0,0,18,2,18-26.3c0-28.3-15.7-27.3-15.7-27.3h-9.4v13.1c0,0,.5,15.7-15.4,15.7H43.6c0,0-14.9-.24-14.9,14.4v24.1C28.7,94.9,26.4,109.8,55.7,109.8z"/></g><path fill="#52a8d8" fill-rule="evenodd" d="M54.9,0C26.8,0,28.6,12.2,28.6,12.2l0,12.6h26.8v3.8H17.9C17.9,28.6,0,26.6,0,54.9c0,28.3,15.7,27.3,15.7,27.3h9.4V69c0,0-.5-15.7,15.4-15.7h26.6c0,0,14.9.24,14.9-14.4V14.9C82,14.9,84.3,0,54.9,0zM40.1,8.5c2.7,0,4.8,2.2,4.8,4.8c0,2.7-2.2,4.8-4.8,4.8c-2.7,0-4.8-2.2-4.8-4.8C35.3,10.7,37.5,8.5,40.1,8.5z"/><path fill="#fbcb12" fill-rule="evenodd" d="M55.7,109.8c28.1,0,26.3-12.2,26.3-12.2l0-12.6H55.2v-3.8h37.4c0,0,18,2,18-26.3c0-28.3-15.7-27.3-15.7-27.3h-9.4v13.1c0,0,.5,15.7-15.4,15.7H43.6c0,0-14.9-.24-14.9,14.4v24.1C28.7,94.9,26.4,109.8,55.7,109.8zM70.5,101.3c-2.7,0-4.8-2.2-4.8-4.8c0-2.7,2.2-4.8,4.8-4.8c2.7,0,4.8,2.2,4.8,4.8C75.3,99.1,73.2,101.3,70.5,101.3z"/></g>
 </svg>
 <span id="tabt">my<i class="u">_</i>report.py</span>
 <svg class="ic" width="16" height="16" viewBox="0 0 16 16" style="left:206px;top:18px"><path d="M1,1 L15,15 M15,1 L1,15" stroke="#b9b9b9" stroke-width="2" fill="none"/></svg>
</div>
<div id="tabr"></div><div id="tabu"></div>

<div id="gutter"></div>
<div id="codearea">
<div class="ln" style="top:54px"><span class="no">1</span><pre class="cd"><b>from</b> ....currencies <b>import</b> Currency</pre></div>
<div class="ln" style="top:90px"><span class="no">2</span><pre class="cd"><b>from</b> ....stocks <b>import</b> Stocks</pre></div>
<div class="ln" style="top:126px"><span class="no">3</span><pre class="cd"></pre></div>
<div class="ln" style="top:162px"><span class="no">4</span><pre class="cd"></pre></div>
<div class="ln" style="top:198px"><span class="no">5</span><pre class="cd"><b>def</b> my<i class="u">_</i>currency():</pre></div>
<div class="ln" style="top:234px"><span class="no">6</span><pre class="cd">    <b>return</b> Currency</pre></div>
<div class="ln" style="top:270px"><span class="no">7</span><pre class="cd"></pre></div>
<div class="ln" style="top:306px"><span class="no">8</span><pre class="cd"></pre></div>
<div class="ln" style="top:342px"><span class="no">9</span><pre class="cd"><b>def</b> my<i class="u">_</i>stocks():</pre></div>
<div class="ln" style="top:378px"><span class="no">10</span><pre class="cd">    <b>return</b> Stocks</pre></div>
<div class="ln" style="top:414px"><span class="no">11</span><pre class="cd"></pre></div>
<div class="ln" style="top:450px"><span class="no">12</span><pre class="cd"></pre></div>
<div class="ln" style="top:486px"><span class="no">13</span><pre class="cd"><b>def</b> my<i class="u">_</i>customers():</pre></div>
<div class="ln cur" style="top:522px"><span class="no">14</span><pre class="cd">    <b>return</b> <span class="err">Customers</span></pre></div>
</div>
<div id="gline"></div>
<div id="refold">
<svg class="fold" width="18" height="21" viewBox="0 0 18 21" style="top:67px"><path d="M2,2 H16 V12.4 L9,18.8 L2,12.4Z" fill="#fff" stroke="#c8c8c8" stroke-width="2"/><rect x="5" y="8.1" width="8" height="2" fill="#c0c0c0"/></svg>
<svg class="fold" width="18" height="21" viewBox="0 0 18 21" style="top:211px"><path d="M2,2 H16 V12.4 L9,18.8 L2,12.4Z" fill="#fff" stroke="#c8c8c8" stroke-width="2"/><rect x="5" y="8.1" width="8" height="2" fill="#c0c0c0"/></svg>
<svg class="fold" width="18" height="21" viewBox="0 0 18 21" style="top:355px"><path d="M2,2 H16 V12.4 L9,18.8 L2,12.4Z" fill="#fff" stroke="#c8c8c8" stroke-width="2"/><rect x="5" y="8.1" width="8" height="2" fill="#c0c0c0"/></svg>
<svg class="fold" width="18" height="21" viewBox="0 0 18 21" style="top:499px"><path d="M2,2 H16 V12.4 L9,18.8 L2,12.4Z" fill="#fff" stroke="#c8c8c8" stroke-width="2"/><rect x="5" y="8.1" width="8" height="2" fill="#c0c0c0"/></svg>
<svg class="fold" width="18" height="21" viewBox="0 0 18 21" style="top:100px"><path d="M2,19 H16 V7.8 L9,1.6 L2,7.8Z" fill="#fff" stroke="#c8c8c8" stroke-width="2"/><rect x="5" y="11" width="8" height="2" fill="#c0c0c0"/></svg>
<svg class="fold" width="18" height="21" viewBox="0 0 18 21" style="top:244px"><path d="M2,19 H16 V7.8 L9,1.6 L2,7.8Z" fill="#fff" stroke="#c8c8c8" stroke-width="2"/><rect x="5" y="11" width="8" height="2" fill="#c0c0c0"/></svg>
<svg class="fold" width="18" height="21" viewBox="0 0 18 21" style="top:388px"><path d="M2,19 H16 V7.8 L9,1.6 L2,7.8Z" fill="#fff" stroke="#c8c8c8" stroke-width="2"/><rect x="5" y="11" width="8" height="2" fill="#c0c0c0"/></svg>
<svg class="fold" width="18" height="21" viewBox="0 0 18 21" style="top:532px"><path d="M2,19 H16 V7.8 L9,1.6 L2,7.8Z" fill="#fff" stroke="#c8c8c8" stroke-width="2"/><rect x="5" y="11" width="8" height="2" fill="#c0c0c0"/></svg>
</div>
<!-- error indicator -->
<svg class="ic" width="20" height="20" viewBox="0 0 20 20" style="left:2168px;top:58px">
 <circle cx="10" cy="10" r="10" fill="#cf5b56"/><rect x="8" y="4" width="4" height="7.4" fill="#fff"/><rect x="8" y="13" width="4" height="4" fill="#fff"/>
</svg>
<div id="errmark"></div>
<!-- squiggle under Customers -->
<svg class="ic" width="128" height="6" viewBox="0 0 128 6" style="left:984px;top:552px">
 <path d="M0,5 L4,1 L8,5 L12,1 L16,5 L20,1 L24,5 L28,1 L32,5 L36,1 L40,5 L44,1 L48,5 L52,1 L56,5 L60,1 L64,5 L68,1 L72,5 L76,1 L80,5 L84,1 L88,5 L92,1 L96,5 L100,1 L104,5 L108,1 L112,5 L116,1 L120,5 L124,1" fill="none" stroke="#f00" stroke-width="1.4"/>
</svg>
<!-- intention bulb in editor -->
<svg class="ic" width="20" height="28" viewBox="0 0 20 28" style="left:848px;top:492px"><path fill="#de5a62" fill-rule="evenodd" d="M10,0 a10,10 0 0 1 10,10 c0,4.2 -2.6,6.4 -4,10 h-12 c-1.4,-3.6 -4,-5.8 -4,-10 a10,10 0 0 1 10,-10z M7.8,3.8 h4.4 v8.4 h-4.4z M7.8,14.2 h4.4 v3.8 h-4.4z"/><rect x="4" y="22" width="12" height="2" fill="#737373"/><rect x="5" y="26" width="10" height="2" fill="#737373"/></svg>

<div id="crumb"><span id="crumbt">my_customers()</span></div><div id="crumbb"></div>

<!-- ======= bottom tool bar ======= -->
<div id="bbar">
 <svg class="ic" width="20" height="17" viewBox="0 0 20 17" style="left:28px;top:14px">
  <path fill="#737373" d="M0,0h4v3.6h-4z M6,0h14v3.6h-14z M0,6.5h4v3.6h-4z M6,6.5h14v3.6h-14z M0,13h4v3.6h-4z M6,13h14v3.6h-14z"/>
 </svg>
 <span class="bt" style="left:58px;letter-spacing:0px"><u>6</u>: TODO</span>
 <svg class="ic" width="22" height="20" viewBox="0 0 22 20" style="left:190px;top:12px">
  <rect width="22" height="20" fill="#6e6e6e"/>
  <path d="M3.6,3.6 L8.8,9 L3.6,14.2" fill="none" stroke="#fff" stroke-width="2"/><rect x="10.2" y="14" width="8" height="2" fill="#fff"/>
 </svg>
 <span class="bt" style="left:223.3px;letter-spacing:0.5px">Terminal</span>
 <svg class="ic" width="24" height="24" viewBox="0 0 24 24" style="left:359px;top:11px"><g transform="translate(1.2,1.4) scale(0.195)"><path fill="#7a7a7a" fill-rule="evenodd" d="M54.9,0C26.8,0,28.6,12.2,28.6,12.2l0,12.6h26.8v3.8H17.9C17.9,28.6,0,26.6,0,54.9c0,28.3,15.7,27.3,15.7,27.3h9.4V69c0,0-.5-15.7,15.4-15.7h26.6c0,0,14.9.24,14.9-14.4V14.9C82,14.9,84.3,0,54.9,0zM40.1,8.5c2.7,0,4.8,2.2,4.8,4.8c0,2.7-2.2,4.8-4.8,4.8c-2.7,0-4.8-2.2-4.8-4.8C35.3,10.7,37.5,8.5,40.1,8.5z"/><path fill="#7a7a7a" fill-rule="evenodd" d="M55.7,109.8c28.1,0,26.3-12.2,26.3-12.2l0-12.6H55.2v-3.8h37.4c0,0,18,2,18-26.3c0-28.3-15.7-27.3-15.7-27.3h-9.4v13.1c0,0,.5,15.7-15.4,15.7H43.6c0,0-14.9-.24-14.9,14.4v24.1C28.7,94.9,26.4,109.8,55.7,109.8zM70.5,101.3c-2.7,0-4.8-2.2-4.8-4.8c0-2.7,2.2-4.8,4.8-4.8c2.7,0,4.8,2.2,4.8,4.8C75.3,99.1,73.2,101.3,70.5,101.3z"/></g></svg>
 <span class="bt" style="left:391.5px;letter-spacing:0.18px">Python Console</span>
 <svg class="ic" width="26" height="23" viewBox="0 0 26 23" style="left:596px;top:11.5px">
  <path fill="#707070" fill-rule="evenodd" d="M6.6,0 H19.4 L26,11.2 L19.4,22.4 H6.6 L0,11.2Z M8.6,5 V17.4 L19.8,11.2Z"/>
 </svg>
 <span class="bt" style="left:630.8px;letter-spacing:0.2px"><u>8</u>: Services</span>
 <span class="bt" style="left:787.5px;letter-spacing:-0.4px">R Console</span>
 <div style="left:2038px;top:28px;width:24px;height:8px;background:#52a062;border-radius:0 0 0 8px"></div>
 <div style="left:2159px;top:21px;width:8px;height:8px;border:2.4px solid #1c1c1c;border-radius:50%"></div>
</div>
<div id="bbarb"></div>

<!-- ======= intention popup ======= -->
<div id="popup">
<div class="pi selp" style="top:0px"><svg class="ic" width="20" height="28" viewBox="0 0 20 28" style="left:22px;top:4px"><path fill="#de5a62" fill-rule="evenodd" d="M10,0 a10,10 0 0 1 10,10 c0,4.2 -2.6,6.4 -4,10 h-12 c-1.4,-3.6 -4,-5.8 -4,-10 a10,10 0 0 1 10,-10z M7.8,3.8 h4.4 v8.4 h-4.4z M7.8,14.2 h4.4 v3.8 h-4.4z"/><rect x="4" y="22" width="12" height="2" fill="#737373"/><rect x="5" y="26" width="10" height="2" fill="#737373"/></svg><span class="pt" style="letter-spacing:0.408px">Import 'analysis.customers.Customers'</span><svg class="ic" width="12" height="16" viewBox="0 0 12 16" style="left:1140px;top:12px"><path d="M0,0 L12,8 L0,16Z" fill="#9b9fa8"/></svg></div>
<div class="pi " style="top:40px"><svg class="ic" width="20" height="28" viewBox="0 0 20 28" style="left:22px;top:4px"><path fill="#de5a62" fill-rule="evenodd" d="M10,0 a10,10 0 0 1 10,10 c0,4.2 -2.6,6.4 -4,10 h-12 c-1.4,-3.6 -4,-5.8 -4,-10 a10,10 0 0 1 10,-10z M7.8,3.8 h4.4 v8.4 h-4.4z M7.8,14.2 h4.4 v3.8 h-4.4z"/><rect x="4" y="22" width="12" height="2" fill="#737373"/><rect x="5" y="26" width="10" height="2" fill="#737373"/></svg><span class="pt" style="letter-spacing:0.352px">Import 'analysis.customers.Customers' locally</span><svg class="ic" width="12" height="16" viewBox="0 0 12 16" style="left:1140px;top:12px"><path d="M0,0 L12,8 L0,16Z" fill="#8e8e8e"/></svg></div>
<div class="pi " style="top:80px"><svg class="ic" width="20" height="28" viewBox="0 0 20 28" style="left:22px;top:4px"><path fill="#de5a62" fill-rule="evenodd" d="M10,0 a10,10 0 0 1 10,10 c0,4.2 -2.6,6.4 -4,10 h-12 c-1.4,-3.6 -4,-5.8 -4,-10 a10,10 0 0 1 10,-10z M7.8,3.8 h4.4 v8.4 h-4.4z M7.8,14.2 h4.4 v3.8 h-4.4z"/><rect x="4" y="22" width="12" height="2" fill="#737373"/><rect x="5" y="26" width="10" height="2" fill="#737373"/></svg><span class="pt" style="letter-spacing:0.193px">Create class 'Customers'</span><svg class="ic" width="12" height="16" viewBox="0 0 12 16" style="left:1140px;top:12px"><path d="M0,0 L12,8 L0,16Z" fill="#8e8e8e"/></svg></div>
<div class="pi " style="top:120px"><svg class="ic" width="20" height="28" viewBox="0 0 20 28" style="left:22px;top:4px"><path fill="#de5a62" fill-rule="evenodd" d="M10,0 a10,10 0 0 1 10,10 c0,4.2 -2.6,6.4 -4,10 h-12 c-1.4,-3.6 -4,-5.8 -4,-10 a10,10 0 0 1 10,-10z M7.8,3.8 h4.4 v8.4 h-4.4z M7.8,14.2 h4.4 v3.8 h-4.4z"/><rect x="4" y="22" width="12" height="2" fill="#737373"/><rect x="5" y="26" width="10" height="2" fill="#737373"/></svg><span class="pt" style="letter-spacing:0.182px">Create parameter 'Customers'</span><svg class="ic" width="12" height="16" viewBox="0 0 12 16" style="left:1140px;top:12px"><path d="M0,0 L12,8 L0,16Z" fill="#8e8e8e"/></svg></div>
<div class="pi " style="top:160px"><svg class="ic" width="20" height="28" viewBox="0 0 20 28" style="left:22px;top:4px"><path fill="#de5a62" fill-rule="evenodd" d="M10,0 a10,10 0 0 1 10,10 c0,4.2 -2.6,6.4 -4,10 h-12 c-1.4,-3.6 -4,-5.8 -4,-10 a10,10 0 0 1 10,-10z M7.8,3.8 h4.4 v8.4 h-4.4z M7.8,14.2 h4.4 v3.8 h-4.4z"/><rect x="4" y="22" width="12" height="2" fill="#737373"/><rect x="5" y="26" width="10" height="2" fill="#737373"/></svg><span class="pt" style="letter-spacing:-0.248px">Rename reference</span><svg class="ic" width="12" height="16" viewBox="0 0 12 16" style="left:1140px;top:12px"><path d="M0,0 L12,8 L0,16Z" fill="#8e8e8e"/></svg></div>
<div class="pi " style="top:200px"><svg class="ic" width="20" height="28" viewBox="0 0 20 28" style="left:22px;top:4px"><path fill="#de5a62" fill-rule="evenodd" d="M10,0 a10,10 0 0 1 10,10 c0,4.2 -2.6,6.4 -4,10 h-12 c-1.4,-3.6 -4,-5.8 -4,-10 a10,10 0 0 1 10,-10z M7.8,3.8 h4.4 v8.4 h-4.4z M7.8,14.2 h4.4 v3.8 h-4.4z"/><rect x="4" y="22" width="12" height="2" fill="#737373"/><rect x="5" y="26" width="10" height="2" fill="#737373"/></svg><span class="pt" style="letter-spacing:0.389px">Ignore unresolved reference 'analysis.reports.regional.funds.my_report.Customers'</span><svg class="ic" width="12" height="16" viewBox="0 0 12 16" style="left:1140px;top:12px"><path d="M0,0 L12,8 L0,16Z" fill="#8e8e8e"/></svg></div>
<div class="pi " style="top:240px"><svg class="ic" width="20" height="28" viewBox="0 0 20 28" style="left:22px;top:4px"><path fill="#de5a62" fill-rule="evenodd" d="M10,0 a10,10 0 0 1 10,10 c0,4.2 -2.6,6.4 -4,10 h-12 c-1.4,-3.6 -4,-5.8 -4,-10 a10,10 0 0 1 10,-10z M7.8,3.8 h4.4 v8.4 h-4.4z M7.8,14.2 h4.4 v3.8 h-4.4z"/><rect x="4" y="22" width="12" height="2" fill="#737373"/><rect x="5" y="26" width="10" height="2" fill="#737373"/></svg><span class="pt" style="letter-spacing:0.443px">Mark all unresolved attributes of 'analysis.reports.regional.funds.my_report' as ignored</span><svg class="ic" width="12" height="16" viewBox="0 0 12 16" style="left:1140px;top:12px"><path d="M0,0 L12,8 L0,16Z" fill="#8e8e8e"/></svg></div>
<div class="sep" style="top:286px"></div>
<div class="pi " style="top:294px"><svg class="ic" width="20" height="28" viewBox="0 0 20 28" style="left:22px;top:4px"><path fill="#f2a60a" fill-rule="evenodd" d="M10,0 a10,10 0 0 1 10,10 c0,4.2 -2.6,6.4 -4,10 h-12 c-1.4,-3.6 -4,-5.8 -4,-10 a10,10 0 0 1 10,-10z"/><rect x="4" y="22" width="12" height="2" fill="#737373"/><rect x="5" y="26" width="10" height="2" fill="#737373"/></svg><span class="pt" style="letter-spacing:0.245px">Reformat file</span><svg class="ic" width="12" height="16" viewBox="0 0 12 16" style="left:1140px;top:12px"><path d="M0,0 L12,8 L0,16Z" fill="#8e8e8e"/></svg></div>
<div class="pi " style="top:334px"><svg class="ic" width="28" height="28" viewBox="0 0 28 28" style="left:19px;top:4px"><path fill="#737373" d="M18.5,0.6 a8.2,8.2 0 0 0 -7.6,11.3 L0.3,22.5 L5,27.2 L15.6,16.6 a8.2,8.2 0 0 0 11.2,-9.4 l-5.2,5.2 l-4.6,-1.2 l-1.2,-4.6 l5.2,-5.2 a8.2,8.2 0 0 0 -2.5,-0.8z"/></svg><span class="pt" style="letter-spacing:0.625px">Edit inspection profile setting</span></div>
<div class="pi " style="top:374px"><svg class="ic" width="20" height="28" viewBox="0 0 20 28" style="left:22px;top:4px"><path fill="#f2a60a" fill-rule="evenodd" d="M10,0 a10,10 0 0 1 10,10 c0,4.2 -2.6,6.4 -4,10 h-12 c-1.4,-3.6 -4,-5.8 -4,-10 a10,10 0 0 1 10,-10z"/><rect x="4" y="22" width="12" height="2" fill="#737373"/><rect x="5" y="26" width="10" height="2" fill="#737373"/></svg><span class="pt" style="letter-spacing:0.367px">Ignore errors like this</span></div>
</div>

</body></html>
